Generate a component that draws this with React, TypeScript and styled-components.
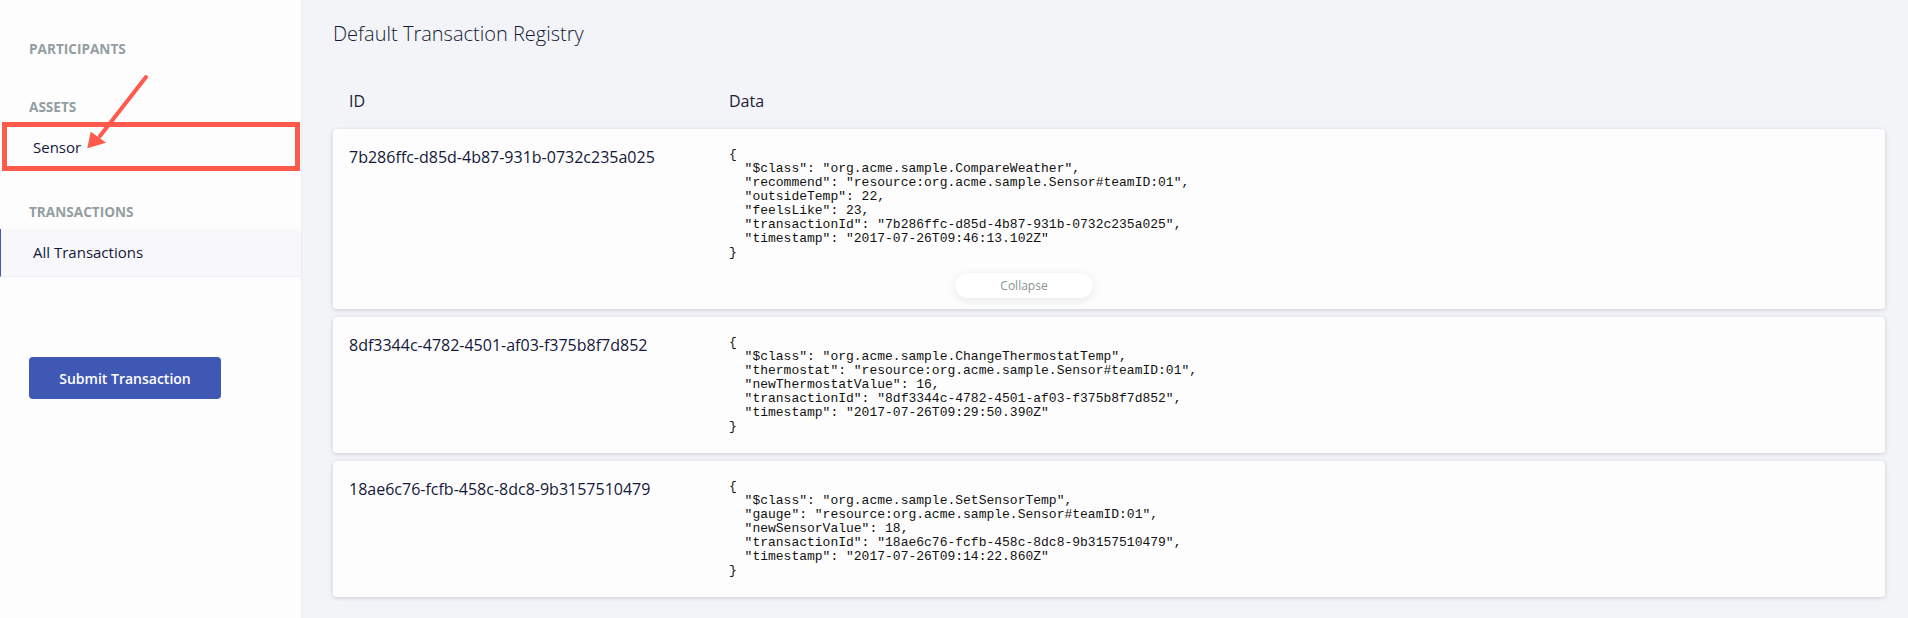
import React from "react";
import styled, { createGlobalStyle } from "styled-components";

const Global = createGlobalStyle`
  html, body { margin: 0; padding: 0; height: 618px; overflow: hidden; background: #f2f4f8; }
  * { box-sizing: border-box; }
  body { font-family: "Open Sans", "Noto Sans", sans-serif; color: #161a33; }
`;

const Page = styled.div`
  display: flex;
  height: 618px;
  position: relative;
`;

const Sidebar = styled.aside`
  width: 302px;
  flex: none;
  background: #fdfdfd;
  border-right: 1px solid #eaecf1;
  padding-top: 40px;
  display: flex;
  flex-direction: column;
`;

const SectionLabel = styled.h3<{ $gap: number }>`
  margin: 0 0 ${(p) => p.$gap}px 0;
  padding-left: 29px;
  height: 18px;
  font-size: 13.6px;
  line-height: 18px;
  font-weight: 700;
  color: #949ea2;
`;

const Section = styled.section<{ $height: number }>`
  height: ${(p) => p.$height}px;
`;

const NavItem = styled.div<{ $active?: boolean }>`
  height: 48px;
  padding-left: ${(p) => (p.$active ? 32 : 33)}px;
  padding-bottom: ${(p) => (p.$active ? 2 : 0)}px;
  display: flex;
  align-items: center;
  font-size: 15px;
  color: #14183a;
  background: ${(p) => (p.$active ? "#f8f8fa" : "transparent")};
  border-left: ${(p) => (p.$active ? "1px solid #3f58b4" : "none")};
  border-bottom: ${(p) => (p.$active ? "1px solid #f0f1f5" : "none")};
`;

const SubmitButton = styled.button`
  margin: 41px 0 0 29px;
  width: 192px;
  height: 42px;
  border: none;
  border-radius: 4px;
  background: #3f58b4;
  color: #fff;
  font-family: "Open Sans", sans-serif;
  font-size: 14px;
  font-weight: 600;
`;

const Main = styled.main`
  flex: 1;
  min-width: 0;
  padding: 21px 23px 0 31px;
`;

const Title = styled.h1`
  margin: 0;
  height: 26px;
  font-size: 20px;
  line-height: 26px;
  font-weight: 300;
  color: #161a33;
`;

const ColumnHeader = styled.div`
  margin-top: 42px;
  height: 40px;
  display: grid;
  grid-template-columns: 380px 1fr;
  padding-left: 16px;
  font-size: 16px;
  line-height: 24px;
  color: #1c2038;
`;

const Cards = styled.div`
  display: flex;
  flex-direction: column;
  gap: 8px;
`;

const Card = styled.article<{ $height: number }>`
  position: relative;
  height: ${(p) => p.$height}px;
  background: #fdfdfd;
  border-radius: 4px;
  box-shadow: 0 1px 4px rgba(60, 70, 95, 0.22);
  display: grid;
  grid-template-columns: 380px 1fr;
  padding: 17px 0 0 16px;
`;

const TxId = styled.div`
  font-size: 16px;
  line-height: 22px;
  color: #14183a;
`;

const Json = styled.pre`
  margin: 2px 0 0;
  font-family: "Liberation Mono", "Courier New", monospace;
  font-size: 13px;
  line-height: 14px;
  color: #111;
`;

const CollapseButton = styled.button`
  position: absolute;
  left: 622px;
  top: 144px;
  width: 138px;
  height: 25px;
  border: none;
  border-radius: 13px;
  background: #fff;
  box-shadow: 0 2px 10px rgba(60, 70, 95, 0.12);
  font-family: "Open Sans", sans-serif;
  font-size: 12px;
  color: #8a9396;
`;

const Highlight = styled.div`
  position: absolute;
  left: 2px;
  top: 122px;
  width: 298px;
  height: 49px;
  border: 5px solid #ff5a4b;
`;

const Arrow = styled.svg`
  position: absolute;
  left: 80px;
  top: 70px;
`;

const transactions = [
  {
    id: "7b286ffc-d85d-4b87-931b-0732c235a025",
    height: 180,
    expanded: true,
    json: `{
  "$class": "org.acme.sample.CompareWeather",
  "recommend": "resource:org.acme.sample.Sensor#teamID:01",
  "outsideTemp": 22,
  "feelsLike": 23,
  "transactionId": "7b286ffc-d85d-4b87-931b-0732c235a025",
  "timestamp": "2017-07-26T09:46:13.102Z"
}`,
  },
  {
    id: "8df3344c-4782-4501-af03-f375b8f7d852",
    height: 136,
    json: `{
  "$class": "org.acme.sample.ChangeThermostatTemp",
  "thermostat": "resource:org.acme.sample.Sensor#teamID:01",
  "newThermostatValue": 16,
  "transactionId": "8df3344c-4782-4501-af03-f375b8f7d852",
  "timestamp": "2017-07-26T09:29:50.390Z"
}`,
  },
  {
    id: "18ae6c76-fcfb-458c-8dc8-9b3157510479",
    height: 136,
    json: `{
  "$class": "org.acme.sample.SetSensorTemp",
  "gauge": "resource:org.acme.sample.Sensor#teamID:01",
  "newSensorValue": 18,
  "transactionId": "18ae6c76-fcfb-458c-8dc8-9b3157510479",
  "timestamp": "2017-07-26T09:14:22.860Z"
}`,
  },
];

export default function App() {
  return (
    <Page>
      <Global />
      <Sidebar>
        <Section $height={58}>
          <SectionLabel $gap={0}>PARTICIPANTS</SectionLabel>
        </Section>
        <Section $height={105}>
          <SectionLabel $gap={7}>ASSETS</SectionLabel>
          <NavItem>Sensor</NavItem>
        </Section>
        <Section $height={113}>
          <SectionLabel $gap={8}>TRANSACTIONS</SectionLabel>
          <NavItem $active>All Transactions</NavItem>
        </Section>
        <SubmitButton>Submit Transaction</SubmitButton>
      </Sidebar>
      <Main>
        <Title>Default Transaction Registry</Title>
        <ColumnHeader>
          <span>ID</span>
          <span>Data</span>
        </ColumnHeader>
        <Cards>
          {transactions.map((t) => (
            <Card key={t.id} $height={t.height}>
              <TxId>{t.id}</TxId>
              <Json>{t.json}</Json>
              {t.expanded && <CollapseButton>Collapse</CollapseButton>}
            </Card>
          ))}
        </Cards>
      </Main>
      <Highlight />
      <Arrow width="72" height="84" viewBox="0 0 72 84">
        <path d="M66 7 L20 66" stroke="#ff5a4b" strokeWidth="4" strokeLinecap="round" fill="none" />
        <path d="M7.3 78.3 L10.7 61.7 L19.3 67.7 L26 72.7 Z" fill="#ff5a4b" />
      </Arrow>
    </Page>
  );
}
